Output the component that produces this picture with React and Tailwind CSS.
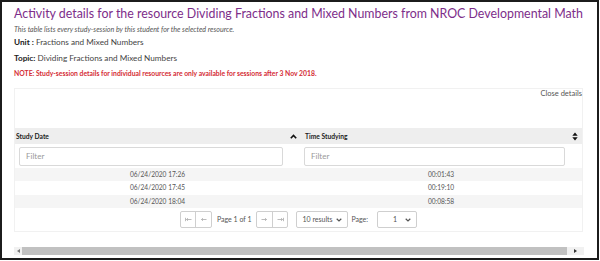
import React from "react";

const SortUp = () => (
  <svg width="7" height="5" viewBox="0 0 7 5" className="block">
    <path d="M0.8 4.2 L3.5 1.4 L6.2 4.2" fill="none" stroke="#111" strokeWidth="1.6" />
  </svg>
);

const SortBoth = () => (
  <svg width="6" height="9" viewBox="0 0 6 9" className="block">
    <path d="M0.3 3.8 L3 0.6 L5.7 3.8 Z" fill="#111" />
    <path d="M0.3 5.2 L3 8.4 L5.7 5.2 Z" fill="#111" />
  </svg>
);

const Chevron = () => (
  <svg width="6" height="4" viewBox="0 0 6 4" className="block">
    <path d="M0.7 0.8 L3 3 L5.3 0.8" fill="none" stroke="#555" strokeWidth="1.2" />
  </svg>
);

const Arrow = ({ dir, bar }) => (
  <svg width="7" height="5" viewBox="0 0 7 5" className="block">
    {dir === "left" ? (
      <g stroke="#aaa" strokeWidth="0.8" fill="none">
        <path d="M1.5 2.5 H6.5" />
        <path d="M3 1.2 L1.5 2.5 L3 3.8" />
        {bar && <path d="M0.5 0.8 V4.2" />}
      </g>
    ) : (
      <g stroke="#aaa" strokeWidth="0.8" fill="none">
        <path d="M0.5 2.5 H5.5" />
        <path d="M4 1.2 L5.5 2.5 L4 3.8" />
        {bar && <path d="M6.5 0.8 V4.2" />}
      </g>
    )}
  </svg>
);

const BtnPair = ({ dir }) => (
  <div className="flex h-[17px] w-[32px] rounded-[2px] border border-[#cfcfcf] bg-white">
    <div className="flex flex-1 items-center justify-center border-r border-[#cfcfcf]">
      <Arrow dir={dir} bar={dir === "left"} />
    </div>
    <div className="flex flex-1 items-center justify-center">
      <Arrow dir={dir} bar={dir === "right"} />
    </div>
  </div>
);

const rows = [
  ["06/24/2020 17:26", "00:01:43", "bg-[#f5f5f5]", "h-[13px]"],
  ["06/24/2020 17:45", "00:19:10", "bg-white", "h-[14px]"],
  ["06/24/2020 18:04", "00:08:58", "bg-[#f5f5f5]", "h-[13px]"],
];

export default function App() {
  return (
    <div className="w-[600px] h-[261px] bg-white font-[family-name:Lato,sans-serif]">
      <div className="w-[599px] h-[260px] border-2 border-[#1c1c1c] pt-[2px] pl-[12px] pr-[14px] overflow-hidden">
        <div className="h-[20px] leading-[20px] text-[12.4px] text-[#7d2d8a] whitespace-nowrap">
          Activity details for the resource Dividing Fractions and Mixed Numbers from NROC Developmental Math
        </div>
        <div className="mt-[1px] h-[10px] leading-[10px] text-[7.1px] italic text-[#555] whitespace-nowrap">
          This table lists every study-session by this student for the selected resource.
        </div>
        <div className="mt-[1px] h-[12px] leading-[12px] text-[8.2px] text-[#444] whitespace-nowrap">
          <span className="font-bold text-[#222]">Unit :</span> Fractions and Mixed Numbers
        </div>
        <div className="mt-[4px] h-[12px] leading-[12px] text-[8.2px] text-[#444] whitespace-nowrap">
          <span className="font-bold text-[#222]">Topic:</span> Dividing Fractions and Mixed Numbers
        </div>
        <div className="mt-[4px] h-[10px] leading-[10px] text-[6.8px] font-bold text-[#d42b34] whitespace-nowrap">
          NOTE: Study-session details for individual resources are only available for sessions after 3 Nov 2018.
        </div>

        <div className="mt-[10px] w-[569px] border border-[#f1f1f1] bg-white">
          <div className="h-[10px] leading-[10px] text-[7.5px] text-[#555] text-right">Close details</div>
          <div className="h-[29px]" />
          <div className="grid grid-cols-[285px_1fr] h-[16px] bg-[#eeeeee] text-[6.7px] font-bold text-[#222]">
            <div className="flex items-center justify-between pl-[1px] pr-[3px]">
              <span>Study Date</span>
              <SortUp />
            </div>
            <div className="flex items-center justify-between pl-[5px] pr-[4px]">
              <span>Time Studying</span>
              <SortBoth />
            </div>
          </div>
          <div className="grid grid-cols-[285px_1fr] h-[24px] pt-[3px]">
            <div className="pl-[4px] pr-[17px]">
              <div className="h-[19px] rounded-[2px] border border-[#d9d9d9] pl-[6px] text-[8px] leading-[17px] text-[#999]">Filter</div>
            </div>
            <div className="pl-[4px] pr-[17px]">
              <div className="h-[19px] rounded-[2px] border border-[#d9d9d9] pl-[6px] text-[8px] leading-[17px] text-[#999]">Filter</div>
            </div>
          </div>
          {rows.map(([d, t, bg, h]) => (
            <div key={d} className={`grid grid-cols-[285px_1fr] ${h} ${bg} text-[6.6px] text-[#555]`}>
              <div className="flex items-center justify-center">{d}</div>
              <div className="flex items-center justify-center">{t}</div>
            </div>
          ))}
          <div className="flex h-[23px] items-start justify-center pt-[3px] text-[7px] text-[#555]">
            <BtnPair dir="left" />
            <span className="ml-[5px] leading-[17px]">Page 1 of 1</span>
            <div className="ml-[5px]">
              <BtnPair dir="right" />
            </div>
            <div className="ml-[8px] flex h-[17px] w-[52px] items-center justify-between rounded-[2px] border border-[#cfcfcf] pl-[5px] pr-[5px]">
              <span>10 results</span>
              <Chevron />
            </div>
            <span className="ml-[3px] leading-[17px]">Page:</span>
            <div className="ml-[9px] flex h-[17px] w-[40px] items-center rounded-[2px] border border-[#cfcfcf] pl-[15px] pr-[5px]">
              <span className="flex-1">1</span>
              <Chevron />
            </div>
          </div>
        </div>

        <div className="mt-[15px] flex h-[8px] w-[570px] bg-[#f1f1f1]">
          <div className="flex w-[8px] items-center justify-center">
            <svg width="3" height="4" viewBox="0 0 3 4"><path d="M3 0 L0 2 L3 4 Z" fill="#777" /></svg>
          </div>
          <div className="w-[545px] bg-[#c1c1c1]" />
          <div className="flex flex-1 items-center justify-center">
            <svg width="3" height="4" viewBox="0 0 3 4"><path d="M0 0 L3 2 L0 4 Z" fill="#333" /></svg>
          </div>
        </div>
      </div>
    </div>
  );
}
